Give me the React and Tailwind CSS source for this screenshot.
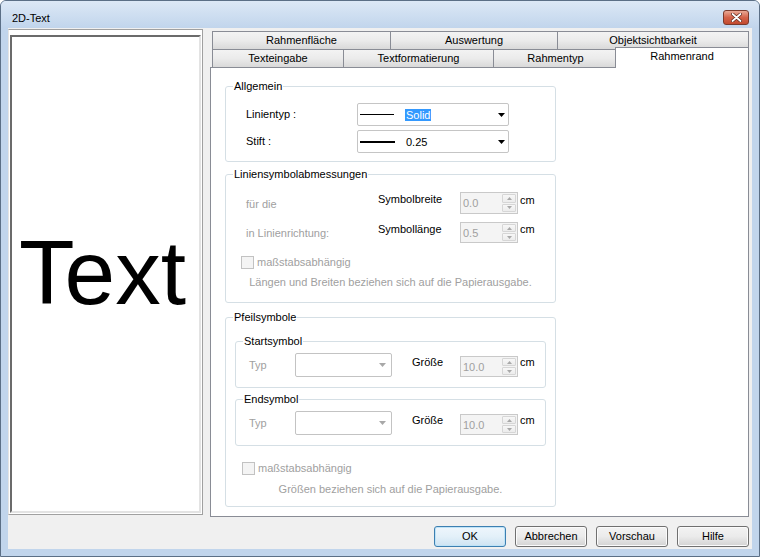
import React from 'react';

const Tab = ({ label, className }) => (
  <div
    className={`h-[18px] flex justify-center pt-[2px] border border-b-0 border-[#898c95] bg-gradient-to-b from-[#f3f3f3] via-[#ebebeb] to-[#d9d9d9] text-[11px] leading-[13px] text-black ${className}`}
  >
    {label}
  </div>
);

const Group = ({ label, className, children }) => (
  <div className={`relative rounded-[3px] border border-[#d5dfe5] ${className}`}>
    <span className="absolute -top-[8px] left-[7px] bg-white px-px text-[11px] leading-[14px] text-black whitespace-nowrap">
      {label}
    </span>
    {children}
  </div>
);

const Arrow = ({ color = '#000' }) => (
  <svg width="7" height="4" viewBox="0 0 7 4" className="shrink-0">
    <polygon points="0,0 7,0 3.5,4" fill={color} />
  </svg>
);

const Spinner = ({ value, h }) => (
  <div className={`flex w-[58px] ${h} border border-[#c9c9c9] bg-[#f4f4f4]`}>
    <div className="flex-1 flex items-center pl-[2px] text-[11px] leading-[14px] text-[#a0a0a0]">{value}</div>
    <div className="flex w-[16px] flex-col gap-px p-px">
      <div className="flex flex-1 items-center justify-center rounded-[1px] border border-[#d6d6d6] bg-gradient-to-b from-[#f7f7f7] to-[#ececec]">
        <svg width="5" height="3" viewBox="0 0 5 3">
          <polygon points="2.5,0 5,3 0,3" fill="#a8a8a8" />
        </svg>
      </div>
      <div className="flex flex-1 items-center justify-center rounded-[1px] border border-[#d6d6d6] bg-gradient-to-b from-[#f7f7f7] to-[#ececec]">
        <svg width="5" height="3" viewBox="0 0 5 3">
          <polygon points="0,0 5,0 2.5,3" fill="#a8a8a8" />
        </svg>
      </div>
    </div>
  </div>
);

const Checkbox = () => (
  <div className="h-[13px] w-[13px] border border-[#c2c2c2] bg-[#f4f4f4]" />
);

const SymbolRow = ({ label }) => (
  <Group label={label} className="h-[47px] w-[311px] pt-[11px] pl-[13px]">
    <div className="flex items-start text-[11px] leading-[14px]">
      <span className="mt-[5px] w-[46px] text-[#a0a0a0]">Typ</span>
      <div className="flex h-[24px] w-[97px] items-center justify-end rounded-[2px] border border-[#c3c3c3] bg-white pr-[5px]">
        <Arrow color="#a8a8a8" />
      </div>
      <span className="ml-[20px] mt-[2px] w-[48px] text-black">Größe</span>
      <div className="mt-[3px]">
        <Spinner value="10.0" h="h-[21px]" />
      </div>
      <span className="ml-[2px] mt-[2px] text-black">cm</span>
    </div>
  </Group>
);

const Button = ({ label, primary }) => (
  <div
    className={`flex h-[21px] w-[72px] items-center justify-center rounded-[3px] border text-[11px] text-black ${
      primary
        ? 'border-[#3c7fb1] bg-gradient-to-b from-[#eef6fc] via-[#e3f0f9] to-[#cde3f2] shadow-[inset_0_0_0_1px_#bfe3f7]'
        : 'border-[#707070] bg-gradient-to-b from-[#f3f3f3] via-[#ebebeb] to-[#d3d3d3] shadow-[inset_0_0_0_1px_#fbfbfb]'
    }`}
  >
    {label}
  </div>
);

export default function App() {
  return (
    <div className="flex h-[557px] w-[760px] flex-col overflow-hidden rounded-t-[6px] border border-[#5b6f86] bg-[#c1d5ec] font-['Liberation_Sans',Arial,sans-serif]">
      {/* Title bar */}
      <div className="flex h-[27px] items-start bg-gradient-to-b from-[#dce8f6] to-[#c1d5ec]">
        <span className="ml-[11px] mt-[10px] text-[11px] leading-[14px] text-black">2D-Text</span>
        <div className="ml-auto mr-[10px] mt-[9px] flex h-[15px] w-[26px] items-center justify-center rounded-[3px] border border-[#7b3a2c] bg-gradient-to-b from-[#e9a996] via-[#d4634a] to-[#c24a2e]">
          <svg width="11" height="9" viewBox="0 0 11 9">
            <path d="M1.5 1 L9.5 8 M9.5 1 L1.5 8" stroke="#5a2418" strokeWidth="3.2" strokeLinecap="round" />
            <path d="M1.5 1 L9.5 8 M9.5 1 L1.5 8" stroke="#ffffff" strokeWidth="1.8" strokeLinecap="round" />
          </svg>
        </div>
      </div>

      {/* Content */}
      <div className="mx-[7px] mb-[7px] flex flex-1 flex-col bg-[#f0f0f0]">
        <div className="flex">
          {/* Preview */}
          <div className="mt-[1px] flex h-[486px] w-[195px] flex-col border border-[#a0a0a0] border-l-[#e3e3e3] bg-white pt-[5px] pl-[1px] pr-[1px] pb-[1px]">
            <div className="flex flex-1 items-center justify-center border-2 border-t-[#6b6b6b] border-l-[#6b6b6b] border-r-[#e3e3e3] border-b-[#e3e3e3] pb-[4px] pr-[6px]">
              <span className="text-[91px] leading-none text-black">Text</span>
            </div>
          </div>

          {/* Tab control */}
          <div className="ml-[7px] mt-[3px] flex h-[486px] w-[539px] flex-col">
            <div className="flex pl-[2px]">
              <Tab label="Rahmenfläche" className="w-[179px]" />
              <Tab label="Auswertung" className="-ml-px w-[168px]" />
              <Tab label="Objektsichtbarkeit" className="-ml-px w-[192px]" />
            </div>
            <div className="flex h-[18px] items-start pl-[2px]">
              <Tab label="Texteingabe" className="w-[132px]" />
              <Tab label="Textformatierung" className="-ml-px w-[151px]" />
              <Tab label="Rahmentyp" className="-ml-px w-[125px]" />
              <div className="relative z-10 -ml-[3px] -mt-[2px] flex h-[21px] w-[134px] justify-center border border-b-0 border-[#898c95] bg-white pt-[2px] text-[11px] leading-[13px] text-black">
                Rahmenrand
              </div>
            </div>
            <div className="h-[450px] border border-[#898c95] bg-white pl-[14px] pt-[18px]">
              {/* Allgemein */}
              <Group label="Allgemein" className="h-[76px] w-[331px] pt-[16px] pl-[20px]">
                <div className="flex h-[23px] items-center text-[11px]">
                  <span className="w-[111px] text-black">Linientyp :</span>
                  <div className="flex h-[23px] w-[152px] items-center rounded-[2px] border border-[#c5c5c5] bg-white pl-[2px] pr-[3px]">
                    <span className="h-px w-[34px] bg-black" />
                    <span className="ml-[11px] bg-[#3399ff] px-px leading-[12px] text-white">Solid</span>
                    <span className="ml-auto">
                      <Arrow />
                    </span>
                  </div>
                </div>
                <div className="mt-[4px] flex h-[23px] items-center text-[11px]">
                  <span className="w-[111px] text-black">Stift :</span>
                  <div className="flex h-[23px] w-[152px] items-center rounded-[2px] border border-[#c5c5c5] bg-white pl-[2px] pr-[3px]">
                    <span className="h-[2px] w-[35px] bg-black" />
                    <span className="ml-[10px] px-px leading-[12px] text-black">0.25</span>
                    <span className="ml-auto">
                      <Arrow />
                    </span>
                  </div>
                </div>
              </Group>

              {/* Liniensymbolabmessungen */}
              <Group label="Liniensymbolabmessungen" className="mt-[12px] h-[129px] w-[331px] pt-[17px]">
                <div className="flex h-[22px] items-start pl-[20px] text-[11px] leading-[14px]">
                  <span className="mt-[5px] w-[132px] text-[#a0a0a0]">für die</span>
                  <span className="w-[82px] text-black">Symbolbreite</span>
                  <Spinner value="0.0" h="h-[22px]" />
                  <span className="ml-[2px] mt-[1px] text-black">cm</span>
                </div>
                <div className="mt-[8px] flex h-[21px] items-start pl-[20px] text-[11px] leading-[14px]">
                  <span className="mt-[4px] w-[132px] text-[#a0a0a0]">in Linienrichtung:</span>
                  <span className="w-[82px] text-black">Symbollänge</span>
                  <Spinner value="0.5" h="h-[21px]" />
                  <span className="ml-[2px] text-black">cm</span>
                </div>
                <div className="mt-[13px] flex items-center gap-[3px] pl-[15px] text-[11px] leading-[13px]">
                  <Checkbox />
                  <span className="text-[#a0a0a0]">maßstabsabhängig</span>
                </div>
                <div className="mt-[6px] text-center text-[11px] leading-[14px] text-[#a0a0a0]">
                  Längen und Breiten beziehen sich auf die Papierausgabe.
                </div>
              </Group>

              {/* Pfeilsymbole */}
              <Group label="Pfeilsymbole" className="mt-[14px] h-[190px] w-[331px] px-[9px] pt-[23px]">
                <SymbolRow label="Startsymbol" />
                <div className="mt-[11px]">
                  <SymbolRow label="Endsymbol" />
                </div>
                <div className="mt-[16px] flex items-center gap-[3px] pl-[7px] text-[11px] leading-[13px]">
                  <Checkbox />
                  <span className="text-[#a0a0a0]">maßstabsabhängig</span>
                </div>
                <div className="mt-[7px] text-center text-[11px] leading-[14px] text-[#a0a0a0]">
                  Größen beziehen sich auf die Papierausgabe.
                </div>
              </Group>
            </div>
          </div>
        </div>

        {/* Buttons */}
        <div className="mt-[9px] flex justify-end gap-[9px] pr-[3px]">
          <Button label="OK" primary />
          <Button label="Abbrechen" />
          <Button label="Vorschau" />
          <Button label="Hilfe" />
        </div>
      </div>
    </div>
  );
}
